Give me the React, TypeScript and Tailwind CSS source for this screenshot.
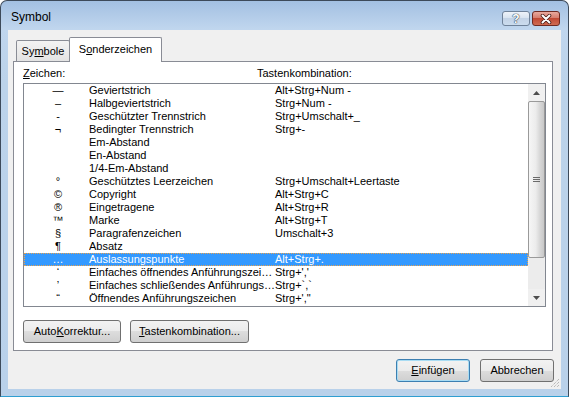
import React from 'react';

type Row = { ch: string; name: string; keys: string };

const rows: Row[] = [
  { ch: '—', name: 'Geviertstrich', keys: 'Alt+Strg+Num -' },
  { ch: '–', name: 'Halbgeviertstrich', keys: 'Strg+Num -' },
  { ch: '-', name: 'Geschützter Trennstrich', keys: 'Strg+Umschalt+_' },
  { ch: '¬', name: 'Bedingter Trennstrich', keys: 'Strg+-' },
  { ch: '', name: 'Em-Abstand', keys: '' },
  { ch: '', name: 'En-Abstand', keys: '' },
  { ch: '', name: '1/4-Em-Abstand', keys: '' },
  { ch: '°', name: 'Geschütztes Leerzeichen', keys: 'Strg+Umschalt+Leertaste' },
  { ch: '©', name: 'Copyright', keys: 'Alt+Strg+C' },
  { ch: '®', name: 'Eingetragene', keys: 'Alt+Strg+R' },
  { ch: '™', name: 'Marke', keys: 'Alt+Strg+T' },
  { ch: '§', name: 'Paragrafenzeichen', keys: 'Umschalt+3' },
  { ch: '¶', name: 'Absatz', keys: '' },
  { ch: '…', name: 'Auslassungspunkte', keys: 'Alt+Strg+.' },
  { ch: '‘', name: 'Einfaches öffnendes Anführungszeichen', keys: "Strg+','" },
  { ch: '’', name: 'Einfaches schließendes Anführungszeichen', keys: 'Strg+`,`' },
  { ch: '“', name: 'Öffnendes Anführungszeichen', keys: 'Strg+\',"' },
];

const SELECTED = 13;

const btnFace =
  'h-[23px] rounded-[3px] border flex items-center justify-center bg-[linear-gradient(to_bottom,#f2f2f2_0%,#ebebeb_50%,#dddddd_50%,#cfcfcf_100%)]';

const App: React.FC = () => {
  return (
    <div className="w-[569px] h-[397px] bg-white">
      <div className="w-[569px] h-[397px] flex flex-col border border-[#3d4a5a] border-b-[#2f9ed0] rounded-t-[7px] overflow-hidden bg-[linear-gradient(to_bottom,#a3c0e2_0px,#c0d6ee_28px,#bcd3ea_80px,#b9d1ea_100%)] font-['Liberation_Sans',Arial,sans-serif] text-[11px] text-black">
        {/* Title bar */}
        <div className="h-[29px] shrink-0 flex items-start pl-[10px] pr-[8px]">
          <span className="mt-[9px] text-[12px] leading-[15px]">Symbol</span>
          <div className="ml-auto mt-[10px] flex gap-[2px]">
            <div className="w-[28px] h-[15px] rounded-[3px] border border-[#6f8299] bg-[linear-gradient(to_bottom,#eef3f9_0%,#d6e2ef_50%,#c3d3e6_50%,#cbdcee_100%)] flex items-center justify-center">
              <span className="text-[12px] leading-[12px] font-bold text-white [text-shadow:0_0_1px_#34475e,0_0_1px_#34475e,0_0_1px_#34475e]">?</span>
            </div>
            <div className="w-[28px] h-[15px] rounded-[3px] border border-[#6e2a22] bg-[linear-gradient(to_bottom,#e8aa9e_0%,#d47868_50%,#c14a35_50%,#cf6b52_100%)] flex items-center justify-center">
              <svg width="12" height="10" viewBox="0 0 12 10">
                <path d="M2.5 1.5 L9.5 8.5 M9.5 1.5 L2.5 8.5" stroke="#4a1d17" strokeWidth="3.6" strokeLinecap="round" />
                <path d="M2.5 1.5 L9.5 8.5 M9.5 1.5 L2.5 8.5" stroke="#ffffff" strokeWidth="2" strokeLinecap="round" />
              </svg>
            </div>
          </div>
        </div>

        {/* Client area */}
        <div className="relative ml-[7px] w-[553px] h-[359px] shrink-0 bg-[#f0f0f0] flex flex-col pt-[7px]">
          {/* Tabs */}
          <div className="flex items-end h-[24px] ml-[8px]">
            <div className="w-[54px] h-[21px] border border-b-0 border-[#898c95] rounded-t-[2px] bg-[linear-gradient(to_bottom,#f3f3f3,#e3e3e3)] flex items-center justify-center leading-[13px]">
              <span>
                Sy<u>m</u>bole
              </span>
            </div>
            <div className="relative z-10 -ml-[1px] -mb-[1px] w-[93px] h-[25px] border border-b-0 border-[#898c95] rounded-t-[2px] bg-white flex items-center justify-center leading-[13px] pb-[1px]">
              <span>
                S<u>o</u>nderzeichen
              </span>
            </div>
          </div>

          {/* Tab page */}
          <div className="relative ml-[5px] w-[540px] h-[290px] border border-[#898c95] bg-white flex flex-col">
            <div className="flex pl-[9px] pt-[5px] h-[18px] leading-[13px]">
              <span className="w-[234px]">
                <u>Z</u>eichen:
              </span>
              <span>Tastenkombination:</span>
            </div>

            {/* List */}
            <div className="ml-[9px] mt-[3px] w-[523px] h-[224px] border border-[#828790] flex">
              <div className="flex-1 flex flex-col overflow-hidden">
                {rows.map((r, i) => (
                  <div
                    key={r.name}
                    className={`h-[13px] shrink-0 flex leading-[13px] whitespace-nowrap ${
                      i === SELECTED
                        ? 'bg-[#3399ff] text-white outline-1 outline-dotted outline-[#e8a24e] -outline-offset-1'
                        : ''
                    }`}
                  >
                    <span className="w-[65px] pl-[3px] flex justify-center">{r.ch}</span>
                    <span className="w-[186px] truncate">{r.name}</span>
                    <span>{r.keys}</span>
                  </div>
                ))}
              </div>

              {/* Scrollbar */}
              <div className="w-[17px] flex flex-col bg-[#ececec]">
                <div className="h-[17px] flex items-center justify-center bg-[#f0f0f0]">
                  <svg width="7" height="4" viewBox="0 0 7 4">
                    <path d="M3.5 0 L7 4 L0 4 Z" fill="#4d4d4d" />
                  </svg>
                </div>
                <div className="h-[157px] border border-[#9a9a9a] rounded-[2px] bg-[linear-gradient(to_right,#f6f6f6_0%,#ececec_45%,#d9d9d9_70%,#c8c8c8_100%)] flex items-center justify-center">
                  <div className="flex flex-col gap-[1px]">
                    <div className="w-[7px] h-[1px] bg-[#6a6a6a]" />
                    <div className="w-[7px] h-[1px] bg-[#6a6a6a]" />
                    <div className="w-[7px] h-[1px] bg-[#6a6a6a]" />
                  </div>
                </div>
                <div className="flex-1" />
                <div className="h-[17px] flex items-center justify-center bg-[#f0f0f0]">
                  <svg width="7" height="4" viewBox="0 0 7 4">
                    <path d="M0 0 L7 0 L3.5 4 Z" fill="#4d4d4d" />
                  </svg>
                </div>
              </div>
            </div>

            {/* Page buttons */}
            <div className="flex ml-[9px] mt-[13px] gap-[9px]">
              <div className={`${btnFace} w-[98px] border-[#707070]`}>
                <span>
                  Auto<u>K</u>orrektur...
                </span>
              </div>
              <div className={`${btnFace} w-[119px] border-[#707070]`}>
                <span>
                  <u>T</u>astenkombination...
                </span>
              </div>
            </div>
          </div>

          {/* Dialog buttons */}
          <div className="flex justify-end gap-[10px] pr-[7px] mt-[8px]">
            <div className={`${btnFace} w-[74px] border-[#3c7fb1] shadow-[inset_0_0_0_1px_#a9dcf3]`}>
              <span>
                <u>E</u>infügen
              </span>
            </div>
            <div className={`${btnFace} w-[74px] border-[#707070]`}>
              <span>Abbrechen</span>
            </div>
          </div>

          {/* Size grip */}
          <svg className="absolute right-[1px] bottom-[1px]" width="10" height="10" viewBox="0 0 10 10">
            <path d="M9 1 L1 9 M9 4 L4 9 M9 7 L7 9" stroke="#a0a0a0" strokeWidth="1" strokeDasharray="1 1" />
          </svg>
        </div>
      </div>
    </div>
  );
};

export default App;
